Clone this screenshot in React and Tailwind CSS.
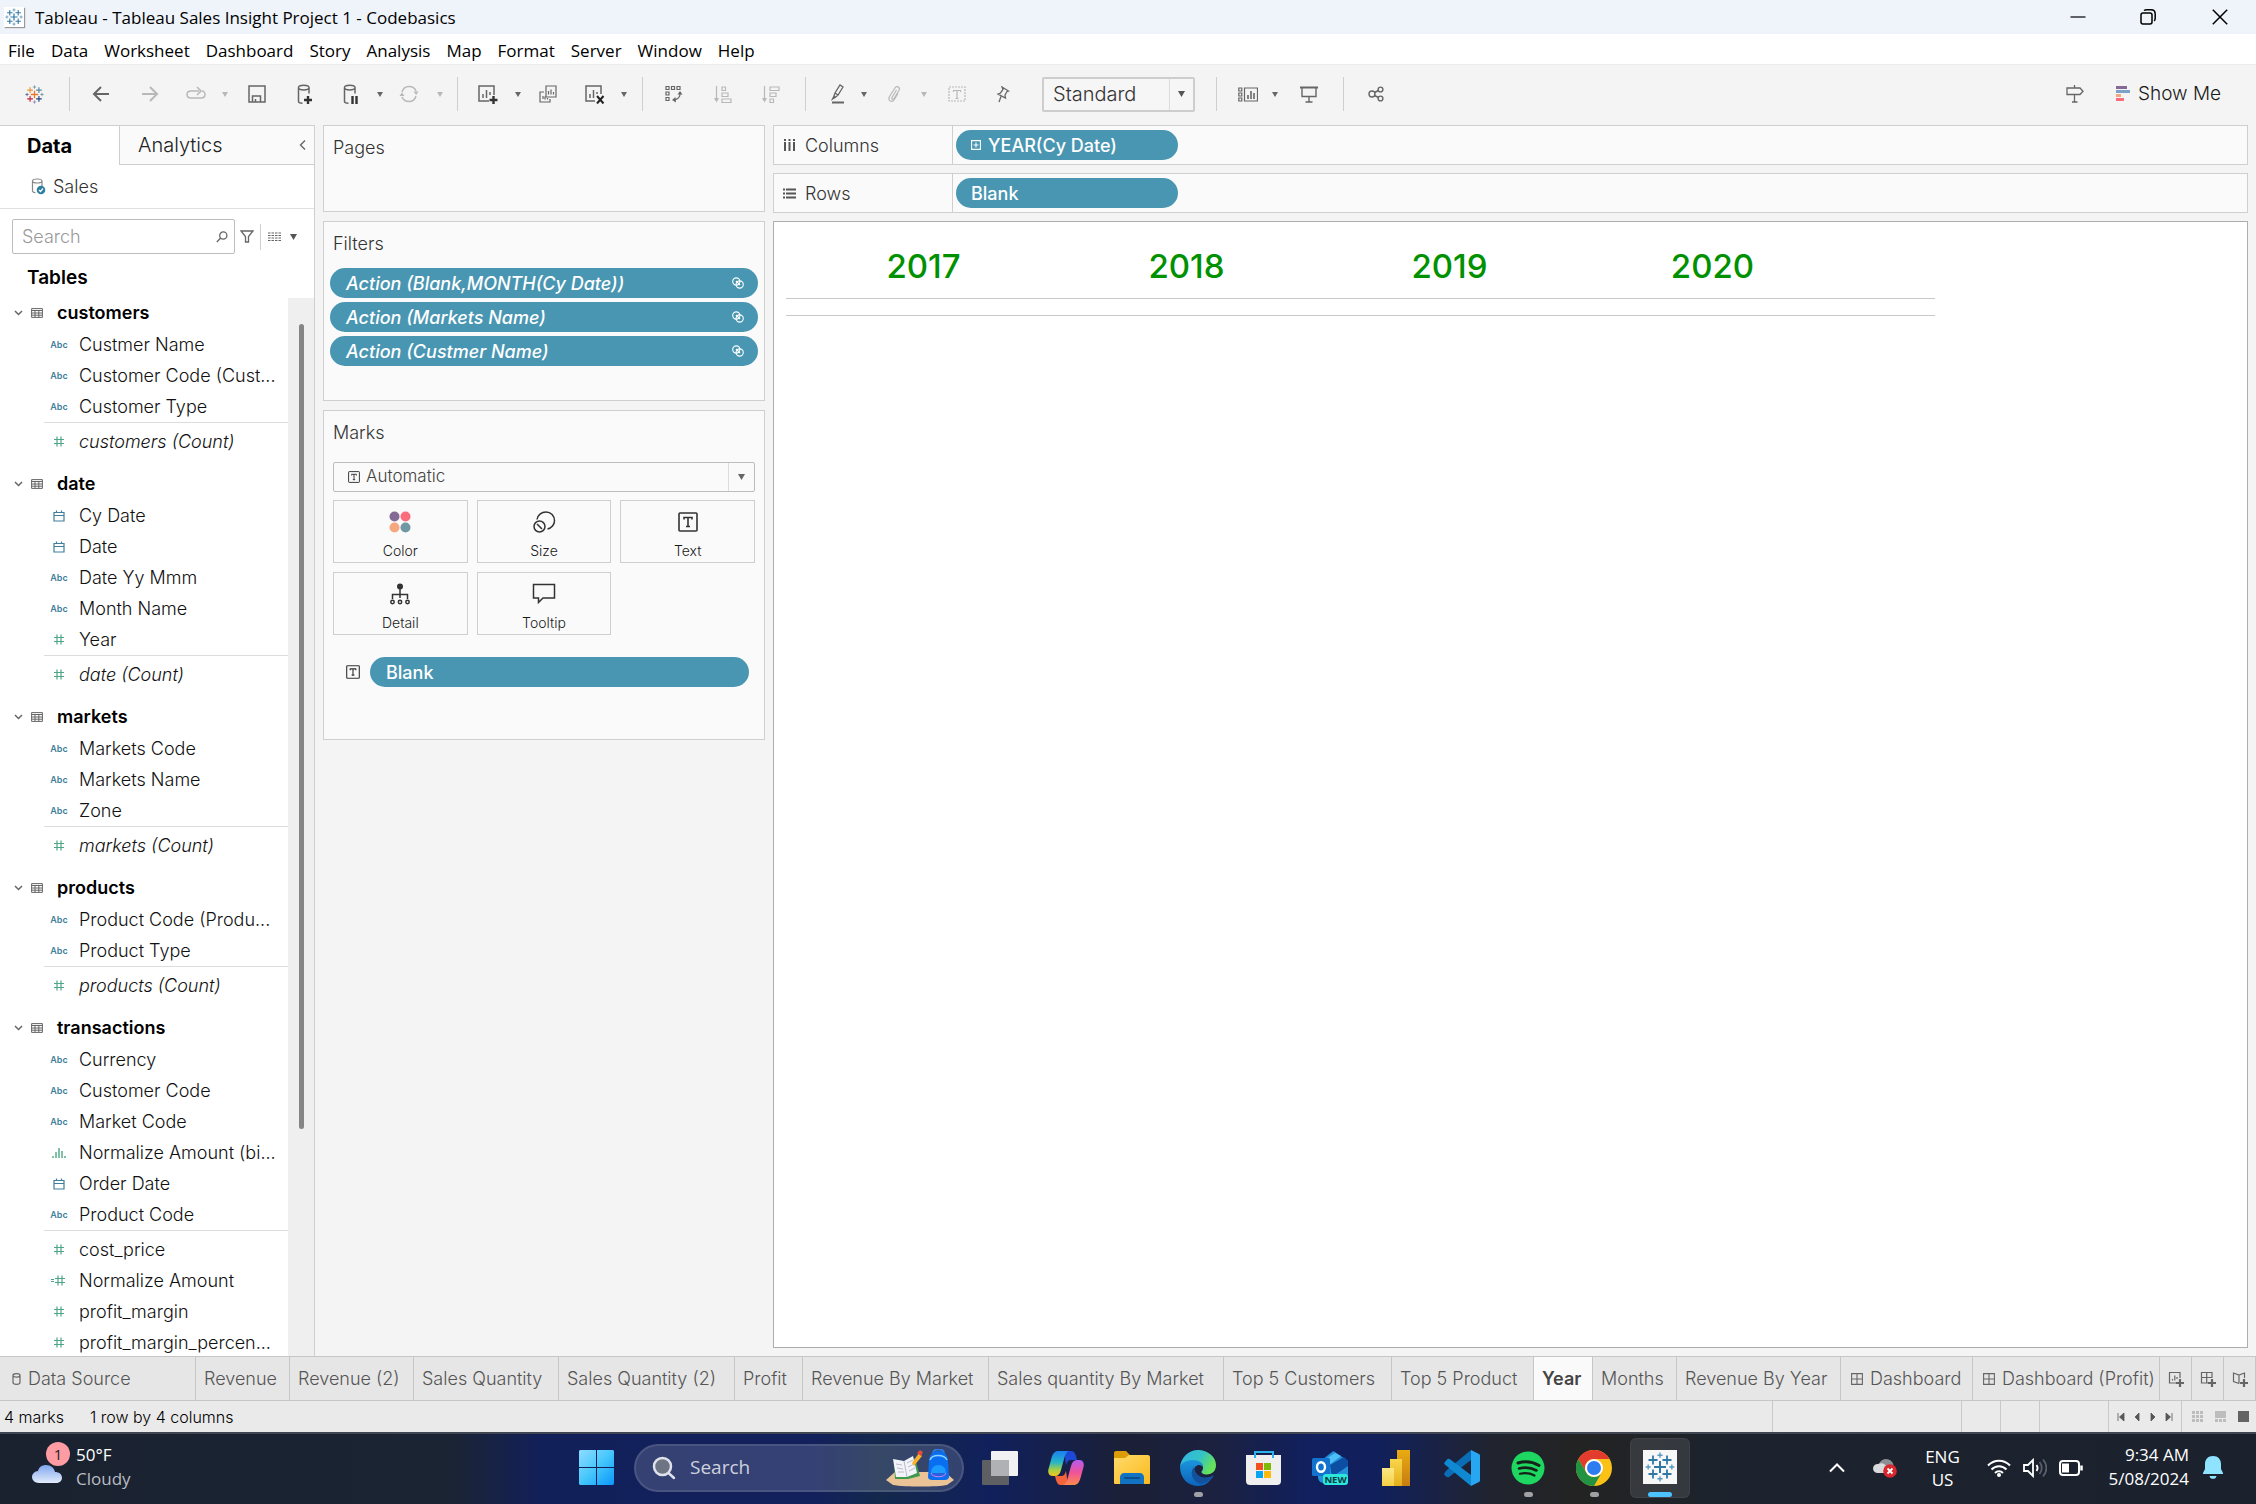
import React from "react";

const FONT = "font-['Inter','Noto_Sans',sans-serif]";
const SEGOE = "font-['Open_Sans','Noto_Sans',sans-serif]";

/* ---------- small shared drawings ---------- */

function TableauMark({ size, colors }) {
  const c = colors || ["#2f78a6", "#2f78a6", "#2f78a6", "#2f78a6", "#2f78a6", "#5a9abf", "#5a9abf", "#5a9abf", "#5a9abf"];
  const plus = (x, y, r, color, w) => (
    <path key={`${x}-${y}`} d={`M${x - r} ${y}h${2 * r}M${x} ${y - r}v${2 * r}`} stroke={color} strokeWidth={w} />
  );
  return (
    <svg width={size} height={size} viewBox="0 0 30 30" fill="none" aria-hidden="true">
      {plus(15, 15, 6, c[0], 2)}
      {plus(8, 8, 4.5, c[1], 1.8)}
      {plus(22, 8, 4.5, c[2], 1.8)}
      {plus(8, 22, 4.5, c[3], 1.8)}
      {plus(22, 22, 4.5, c[4], 1.8)}
      {plus(15, 3.2, 2.6, c[5], 1.4)}
      {plus(15, 26.8, 2.6, c[6], 1.4)}
      {plus(3.2, 15, 2.6, c[7], 1.4)}
      {plus(26.8, 15, 2.6, c[8], 1.4)}
    </svg>
  );
}

function Icon({ w = 24, h = 24, className = "text-[#666]", children, sw = 1.5 }) {
  return (
    <svg width={w} height={h} viewBox={`0 0 ${w} ${h}`} fill="none" stroke="currentColor" strokeWidth={sw} className={className} aria-hidden="true">
      {children}
    </svg>
  );
}

function Caret({ className = "text-[#666]", w = 6 }) {
  return (
    <svg width={w} height={w - 1} viewBox="0 0 6 5" className={className} aria-hidden="true">
      <path d="M0 0h6L3 5z" fill="currentColor" />
    </svg>
  );
}

function TextBoxIcon({ size = 14, className = "text-[#333]" }) {
  return (
    <svg width={size} height={size} viewBox="0 0 20 20" fill="none" stroke="currentColor" strokeWidth="1.6" className={className} aria-hidden="true">
      <rect x="1" y="1" width="18" height="18" rx="1" />
      <path d="M6 7.5V5.5h8v2M10 5.5v9M8 14.5h4" />
    </svg>
  );
}

function DashGrid() {
  return (
    <Icon w={12} h={12} sw={1.1}>
      <path d="M.6 .6h10.8v10.8H.6zM6 .6v10.8M.6 6h10.8" />
    </Icon>
  );
}

/* ---------- title bar and menu ---------- */

function TitleBar() {
  return (
    <header className={`flex h-[34px] shrink-0 items-center bg-[#eff3fa] ${SEGOE}`}>
      <div className="ml-1 flex h-5 w-5 items-center justify-center bg-white shadow-[1px_1px_1px_#999]">
        <TableauMark size={18} />
      </div>
      <h1 className="ml-[11px] pt-px text-[17px] leading-6 text-black">Tableau - Tableau Sales Insight Project 1 - Codebasics</h1>
      <div className="ml-auto flex h-full text-black">
        <button aria-label="Minimize" className="flex w-[70px] items-center justify-center">
          <Icon w={16} h={16} sw={1.2} className="text-black"><path d="M.5 8h15" /></Icon>
        </button>
        <button aria-label="Restore" className="flex w-[70px] items-center justify-center">
          <Icon w={16} h={16} className="text-black">
            <rect x="1" y="4" width="11" height="11" rx="2" />
            <path d="M4 1.5C5 .8 6 .8 7 .8h4c2.500 0 4.200 1.700 4.200 4.200v4c0 1-.2 2-.9 3" />
          </Icon>
        </button>
        <button aria-label="Close" className="flex w-[73px] items-center justify-center">
          <Icon w={16} h={16} className="text-black"><path d="M.8 .8l14.400 14.400M15.200 .8L.8 15.200" /></Icon>
        </button>
      </div>
    </header>
  );
}

const menus = ["File", "Data", "Worksheet", "Dashboard", "Story", "Analysis", "Map", "Format", "Server", "Window", "Help"];

function MenuBar() {
  return (
    <nav className={`flex h-[30px] shrink-0 items-center gap-4 bg-white pl-2 pt-[3px] text-[17px] text-black ${SEGOE}`}>
      {menus.map((m) => (
        <button key={m} className="leading-6">{m}</button>
      ))}
    </nav>
  );
}

/* ---------- toolbar ---------- */

function Sep({ className }) {
  return <div className={`h-[34px] w-px shrink-0 bg-[#cfcfcf] ${className}`} />;
}

function Tool({ label, className, children }) {
  return (
    <button aria-label={label} className={`flex h-10 shrink-0 items-center justify-center ${className}`}>
      {children}
    </button>
  );
}

const cyl = "M1.500 3.500v14c0 1 1.500 1.600 4 1.700M12 3.500v6M1.500 3.500c0-1.400 2.200-2.300 5.200-2.300S12 2.100 12 3.500 9.800 5.900 6.700 5.900 1.500 4.900 1.500 3.500z";

function Toolbar() {
  const dim = "text-[#b8b8b8]";
  return (
    <div className="flex h-[61px] shrink-0 items-center border-t border-[#ececec] bg-[#f4f4f4] pb-[2px]">
      <Tool label="Start page" className="w-[69px]">
        <TableauMark size={19} colors={["#e8762c", "#e8963a", "#5b879b", "#c72035", "#1f457e", "#7199a6", "#8a8fb0", "#5c6692", "#7199a6"]} />
      </Tool>
      <Sep />
      <Tool label="Undo" className="ml-[6px] w-[50px]">
        <Icon w={18} h={16} sw={2}><path d="M9 1L2 8l7 7M2 8h15" /></Icon>
      </Tool>
      <Tool label="Redo" className="w-12">
        <Icon w={18} h={16} sw={2} className={dim}><path d="M9 1l7 7-7 7M16 8H1" /></Icon>
      </Tool>
      <Tool label="Replay" className="w-11">
        <Icon w={20} h={16} className={dim}><path d="M13 5H5C2.500 5 1 6.500 1 8.500S2.500 12 5 12h10c2.500 0 4-1.500 4-3.500S17.500 5 16 5" /><path d="M11 1l4 4-4 4" /></Icon>
      </Tool>
      <Tool label="Replay options" className="w-[14px]"><Caret className={dim} /></Tool>
      <Tool label="Save" className="w-[50px]">
        <Icon w={18} h={18}><path d="M1 1h16v16H1z" /><path d="M4.500 17v-6h8v6M7.500 17v-3" /></Icon>
      </Tool>
      <Tool label="New data source" className="w-[46px]">
        <Icon w={16} h={20}><path d={cyl} /><path d="M11 12v8M7 16h8" strokeWidth="2.400" className="text-[#333]" /></Icon>
      </Tool>
      <Tool label="Pause updates" className="w-[46px]">
        <Icon w={16} h={20}><path d={cyl} /><path d="M9.500 12v8M13.500 12v8" strokeWidth="2.400" className="text-[#333]" /></Icon>
      </Tool>
      <Tool label="Pause options" className="w-3"><Caret /></Tool>
      <Tool label="Refresh" className="w-[46px]">
        <Icon w={20} h={18} className={dim}><path d="M3 7c1-3.500 4-5.500 7-5.500S16 3.500 17 6M17 11c-1 3.500-4 5.500-7 5.500S4 14.500 3 12" /><path d="M14.500 6.500h5l-2.300 3.500zM.5 11h5L3 7.500z" fill="currentColor" stroke="none" /></Icon>
      </Tool>
      <Tool label="Refresh options" className="w-4"><Caret className={dim} /></Tool>
      <Sep className="ml-[9px]" />
      <Tool label="New worksheet" className="ml-[6px] w-12">
        <Icon w={20} h={19}><path d="M11 16H1V1h15v9M5 13V9M8.500 13V5M12 10V7" /><path d="M15.500 11v8M11.500 15h8" strokeWidth="2.400" className="text-[#333]" /></Icon>
      </Tool>
      <Tool label="New worksheet options" className="w-3"><Caret /></Tool>
      <Tool label="Duplicate" className="w-12">
        <Icon w={18} h={18} sw={1.2}><path d="M7 1h10v11H7zM5 7H1v10h10v-3M9.500 9.500V6M12 9.500v-5M14.500 9.500V7M4 14v-3M6 14.500v-3M8.500 14.500v-1.500" /></Icon>
      </Tool>
      <Tool label="Clear sheet" className="w-[46px]">
        <Icon w={20} h={19}><path d="M10 16H1V1h15v8M5 13V9M8.500 13V5M12 9V7" /><path d="M12 11l6.500 7.500M18.500 11L12 18.500" strokeWidth="2" className="text-[#222]" /></Icon>
      </Tool>
      <Tool label="Clear options" className="w-3"><Caret /></Tool>
      <Sep className="ml-3" />
      <Tool label="Swap rows and columns" className="ml-[7px] w-12">
        <Icon w={18} h={18} sw={1.2}><path d="M1 1.500h3v3H1zM6.500 1.500h3v3h-3zM12 1.500h3v3h-3zM1 7h3v3H1zM1 12.500h3v3H1z" /><path d="M15 8c.5 4-2.500 6.500-6 7" /><path d="M12.500 9.500L15 6l2.500 3.500zM10.500 12l-3.500 3 4 2.500z" fill="currentColor" stroke="none" /></Icon>
      </Tool>
      <Tool label="Sort ascending" className="w-[50px]">
        <Icon w={18} h={17} sw={1.2} className={dim}><path d="M2.500 0v15M8 1h3.500v3.500H8zM8 7h6v3.500H8zM8 13h9v3.500H8z" /><path d="M0 12h5l-2.500 4.500z" fill="currentColor" stroke="none" /></Icon>
      </Tool>
      <Tool label="Sort descending" className="w-[46px]">
        <Icon w={18} h={17} sw={1.2} className={dim}><path d="M2.500 0v15M8 1h9v3.500H8zM8 7h6v3.500H8zM8 13h3.500v3.500H8z" /><path d="M0 12h5l-2.500 4.500z" fill="currentColor" stroke="none" /></Icon>
      </Tool>
      <Sep className="ml-[11px]" />
      <Tool label="Highlight" className="ml-[11px] w-[42px]">
        <Icon w={14} h={20} sw={1.3}><path d="M3 12l1-3 5-8 3 2-5 8-3 2.500zM4 9l3 2M3 12l-1.500 3 2.500-1.500" /><path d="M1 18.500h12" strokeWidth="2" /></Icon>
      </Tool>
      <Tool label="Highlight options" className="w-[10px]"><Caret /></Tool>
      <Tool label="Group members" className="w-[50px]">
        <Icon w={14} h={18} sw={1.2} className={dim}><path d="M9.500 5L5 12.500c-.8 1.500 1 2.500 2 1L12 5.500c1.500-3-2-5.500-4-2.500L2.500 11.500C.5 15 4.500 18.500 7 15l4-6.500" /></Icon>
      </Tool>
      <Tool label="Group options" className="w-[10px]"><Caret className={dim} /></Tool>
      <Tool label="Show mark labels" className="w-14">
        <Icon w={18} h={16} sw={1.2} className={dim}><rect x="1" y="1" width="16" height="14" strokeDasharray="2 1" /><path d="M5.500 6V4.500h7V6M9 4.500v8M7.500 12.500h3" /></Icon>
      </Tool>
      <Tool label="Fix axes" className="w-9">
        <Icon w={14} h={17} sw={1.3}><path d="M6 1l6.500 4-1.500.5-2 3.500.5 3L2 8l2.500-1L7 3.500zM5 10.500L3 16" /></Icon>
      </Tool>
      <div className="relative ml-[21px] h-[35px] w-[153px] rounded-[2px] border-2 border-[#cdcdcd] bg-[#f6f6f6]">
        <select aria-label="Fit" className={`h-full w-full appearance-none bg-transparent pl-[9px] text-[20px] text-[#333] ${FONT} font-light`}>
          <option>Standard</option>
        </select>
        <div className="pointer-events-none absolute inset-y-0 right-0 flex w-6 items-center justify-center border-l border-[#dcdcdc]"><Caret className="text-[#555]" w={7} /></div>
      </div>
      <Sep className="ml-[21px]" />
      <Tool label="Show cards" className="ml-[10px] w-[42px]">
        <Icon w={20} h={15} sw={1.2}><path d="M.8 1h3v3h-3zM.8 6h3v3h-3zM.8 11h3v3h-3zM6.500 1h13v13h-13z" /><path d="M10 12V8M13 12V4M16 12V6" strokeWidth="1.600" /></Icon>
      </Tool>
      <Tool label="Card options" className="w-3"><Caret /></Tool>
      <Tool label="Presentation mode" className="w-14">
        <Icon w={18} h={17} sw={1.4}><path d="M0 1.500h18" strokeWidth="2" /><path d="M2 2v8.500h14V2M9 10.500V16M5.500 16h7" /></Icon>
      </Tool>
      <Sep className="ml-[6px]" />
      <Tool label="Share" className="w-16">
        <Icon w={16} h={16} sw={1.4}><circle cx="4" cy="8" r="3" /><circle cx="12.500" cy="3.500" r="2.400" /><circle cx="12.500" cy="12.500" r="2.400" /><path d="M6.500 6.500l4-2M6.500 9.500l4 2" /></Icon>
      </Tool>
      <Tool label="Data guide" className="ml-auto mr-8 w-[18px]">
        <Icon w={18} h={18} sw={1.3}><path d="M1 3h13l3 3.200L14 9.500H1zM8.500 0v3M8.500 9.500V17M6 17h5.500" /></Icon>
      </Tool>
      <button className={`mr-[35px] flex items-center gap-2 text-[19px] leading-7 text-[#1a1a1a] ${FONT}`}>
        <svg width="14" height="16" aria-hidden="true">
          <path d="M0 0h11v3H0z" fill="#846b95" /><path d="M0 4h14v3H0z" fill="#7ba3c9" /><path d="M0 8h5v3H0z" fill="#f5a77f" /><path d="M0 12h8v3H0z" fill="#fb6c7c" />
        </svg>
        <span className="font-light">Show Me</span>
      </button>
    </div>
  );
}

/* ---------- data pane ---------- */

const tables = [
  { name: "customers", dims: [["abc", "Custmer Name"], ["abc", "Customer Code (Cust..."], ["abc", "Customer Type"]], measures: [["num", "customers (Count)", true]] },
  { name: "date", dims: [["cal", "Cy Date"], ["cal", "Date"], ["abc", "Date Yy Mmm"], ["abc", "Month Name"], ["num", "Year"]], measures: [["num", "date (Count)", true]] },
  { name: "markets", dims: [["abc", "Markets Code"], ["abc", "Markets Name"], ["abc", "Zone"]], measures: [["num", "markets (Count)", true]] },
  { name: "products", dims: [["abc", "Product Code (Produ..."], ["abc", "Product Type"]], measures: [["num", "products (Count)", true]] },
  {
    name: "transactions",
    dims: [["abc", "Currency"], ["abc", "Customer Code"], ["abc", "Market Code"], ["bin", "Normalize Amount (bi..."], ["cal", "Order Date"], ["abc", "Product Code"]],
    measures: [["num", "cost_price"], ["calc", "Normalize Amount"], ["num", "profit_margin"], ["num", "profit_margin_percen..."]],
  },
];

function FieldIcon({ kind }) {
  if (kind === "abc") return <span className="text-[9px] font-semibold leading-none text-[#3f7f9c]">Abc</span>;
  if (kind === "cal")
    return <Icon w={12} h={12} sw={1.2} className="text-[#3f7f9c]"><path d="M1 2.500h10v8.500H1zM1 5.500h10M3.500 .5v2M8.500 .5v2" /></Icon>;
  if (kind === "bin")
    return <Icon w={14} h={11} sw={1.4} className="text-[#4ea687]"><path d="M1 11V9M4 11V5M7 11V1M10 11V4M13 11V9" /></Icon>;
  if (kind === "calc")
    return <Icon w={18} h={11} sw={1.2} className="text-[#4ea687]"><path d="M1 4.500h3M1 6.500h3M8 .5v10M12 .5v10M5 3.500h10M5 7.500h10" /></Icon>;
  return <Icon w={10} h={11} sw={1.2} className="text-[#4ea687]"><path d="M3 .5v10M7 .5v10M0 3.500h10M0 7.500h10" /></Icon>;
}

function Field({ field }) {
  const [kind, name, italic] = field;
  return (
    <li className="flex h-[31px] items-center">
      <span className="ml-[44px] flex w-[30px] items-center justify-center">
        <FieldIcon kind={kind} />
      </span>
      <span className={`ml-[5px] whitespace-nowrap text-[18px] text-[#111] ${italic ? "italic" : ""}`}>{name}</span>
    </li>
  );
}

function DataPane() {
  return (
    <aside className={`flex w-[315px] shrink-0 flex-col border-r border-t border-[#cfcfcf] bg-white font-light ${FONT}`}>
      <div className="flex h-[39px] shrink-0 text-[20px] text-black">
        <button className="w-[119px] pr-5 text-center font-bold">Data</button>
        <button className="flex flex-1 items-center border-b border-l border-[#cfcfcf] bg-[#fafafa] pl-[18px] text-[#222]">Analytics</button>
        <button aria-label="Collapse pane" className="flex w-6 items-center justify-center border-b border-[#cfcfcf] bg-[#fafafa]">
          <Icon w={7} h={10} sw={1.4}><path d="M6 .5L1.500 5 6 9.500" /></Icon>
        </button>
      </div>
      <button className="flex h-[44px] shrink-0 items-center gap-[7px] border-b border-[#e0e0e0] pl-[31px] text-[18px] text-[#333]">
        <Icon w={15} h={17} sw={1.2} className="text-[#888]">
          <path d="M1.500 3v10c0 1 1 1.500 3 1.700M11 3v5M1.500 3C1.500 1.800 3.500 1 6.300 1S11 1.800 11 3 9 5 6.300 5 1.500 4.200 1.500 3z" />
          <circle cx="10" cy="12" r="4.300" fill="#2e7f9f" stroke="none" /><path d="M8 12l1.500 1.500 2.500-3" stroke="#fff" />
        </Icon>
        Sales
      </button>
      <div className="flex shrink-0 items-center pl-3 pt-[10px]">
        <div className="flex h-[35px] w-[223px] items-center rounded-[2px] border border-[#bdbdbd] pl-[9px] pr-[6px]">
          <input type="text" aria-label="Search fields" placeholder="Search" className="w-0 flex-1 text-[18px] outline-none placeholder:text-[#999]" />
          <Icon w={12} h={12} sw={1.3}><circle cx="7.300" cy="4.500" r="3.600" /><path d="M4.700 7L.8 11" /></Icon>
        </div>
        <button aria-label="Filter fields" className="ml-[5px]"><Icon w={14} h={13} sw={1.3}><path d="M1 1h12L8.500 6.500V12h-3V6.500z" /></Icon></button>
        <div className="ml-[6px] h-[26px] w-px bg-[#cfcfcf]" />
        <button aria-label="View options" className="ml-[7px] flex items-center gap-[9px]">
          <Icon w={13} h={10} sw={1.2}><path d="M0 1h13M0 3.500h13M0 6h13M0 8.500h13" strokeDasharray="2.500 1" /></Icon>
          <Caret className="text-[#555]" w={7} />
        </button>
      </div>
      <h2 className="flex h-[44px] shrink-0 items-center pl-[27px] pt-1 text-[19px] font-semibold text-black">Tables</h2>
      <div className="flex min-h-0 flex-1">
        <ul className="min-w-0 flex-1 overflow-hidden">
          {tables.map((t) => (
            <li key={t.name} className="mb-[12px]">
              <button className="flex h-[29px] w-full items-center pl-[14px] text-[18px] font-semibold text-black">
                <Icon w={9} h={6} sw={1.5}><path d="M1 1l3.500 3.500L8 1" /></Icon>
                <Icon w={12} h={10} sw={1} className="ml-[8px] text-[#666]"><path d="M.6 .6h10.800v8.800H.6zM.6 2.500h10.800M.6 5h10.800M.6 7.200h10.800M4 2.500v7M7.800 2.500v7" /></Icon>
                <span className="ml-[14px]">{t.name}</span>
              </button>
              <ul className="pt-[2px]">
                {t.dims.map((f) => <Field key={f[1]} field={f} />)}
              </ul>
              <ul className="ml-[44px] border-t border-[#dcdcdc] pt-[3px] *:-ml-[44px]">
                {t.measures.map((f) => <Field key={f[1]} field={f} />)}
              </ul>
            </li>
          ))}
        </ul>
        <div className="flex w-[26px] shrink-0 justify-center bg-[#efefef] pt-[26px]">
          <div className="h-[78%] w-[5px] rounded-full bg-[#858585]" />
        </div>
      </div>
    </aside>
  );
}

/* ---------- cards ---------- */

const pill = "flex h-[30px] items-center rounded-full bg-[#4996b2] text-[18px] text-white";

function Card({ title, className, children }) {
  return (
    <section className={`border border-[#cfcfcf] bg-[#fafafa] ${className}`}>
      <h2 className="px-[9px] pt-2 text-[18px] leading-7 text-[#333]">{title}</h2>
      {children}
    </section>
  );
}

function MarkButton({ label, children }) {
  return (
    <button className="flex h-[63px] flex-col items-center justify-end border border-[#cfcfcf] bg-[#fafafa] pb-px text-[#1a1a1a]">
      <span className="flex h-6 items-center">{children}</span>
      <span className="mt-[7px] text-[14px] leading-5">{label}</span>
    </button>
  );
}

function Cards() {
  return (
    <div className={`ml-2 flex w-[442px] shrink-0 flex-col gap-[9px] font-light ${FONT}`}>
      <Card title="Pages" className="h-[87px]" />
      <Card title="Filters" className="h-[180px]">
        <ul className="mt-[10px] flex flex-col gap-1 px-[6px]">
          {["Action (Blank,MONTH(Cy Date))", "Action (Markets Name)", "Action (Custmer Name)"].map((f) => (
            <li key={f}>
              <button className={`${pill} w-full justify-between pl-4 pr-[14px] font-medium italic`}>
                {f}
                <Icon w={12} h={12} sw={1.1} className="text-white"><circle cx="4.300" cy="4.500" r="3.600" /><circle cx="7.700" cy="7.500" r="3.600" /><path d="M4 4l4 4" /></Icon>
              </button>
            </li>
          ))}
        </ul>
      </Card>
      <Card title="Marks" className="h-[330px]">
        <div className="px-[9px] pt-[15px]">
          <div className="relative h-[30px] rounded-[2px] border border-[#bdbdbd]">
            <select aria-label="Mark type" className="h-full w-full appearance-none bg-transparent pl-8 text-[17px] text-[#444]">
              <option>Automatic</option>
            </select>
            <div className="pointer-events-none absolute inset-y-0 left-[14px] flex items-center"><TextBoxIcon size={12} /></div>
            <div className="pointer-events-none absolute inset-y-0 right-0 flex w-[26px] items-center justify-center border-l border-[#dcdcdc]"><Caret w={7} /></div>
          </div>
          <div className="mt-[8px] grid grid-cols-3 gap-[9px]">
            <MarkButton label="Color">
              <svg width="22" height="22" aria-hidden="true">
                <circle cx="5.500" cy="5.500" r="5" fill="#846b95" /><circle cx="16.500" cy="5.500" r="5" fill="#fb6c7c" /><circle cx="5.500" cy="16.500" r="5" fill="#f5a77f" /><circle cx="16.500" cy="16.500" r="5" fill="#6f98a4" />
              </svg>
            </MarkButton>
            <MarkButton label="Size">
              <Icon w={24} h={22} sw={1.5} className="text-[#333]"><circle cx="7.500" cy="15.500" r="5.500" /><path d="M5 13l5 5M5 8.500C5.500 4 9.500 1 14 1c5 0 8.500 4 8.500 8.700 0 4-3 7.600-7 8.300" /></Icon>
            </MarkButton>
            <MarkButton label="Text"><TextBoxIcon size={20} /></MarkButton>
            <MarkButton label="Detail">
              <Icon w={20} h={22} sw={1.5} className="text-[#333]"><circle cx="10" cy="3.500" r="3" fill="currentColor" stroke="none" /><path d="M10 5v10M2.500 16v-4.500h15V16" /><circle cx="2.500" cy="19" r="1.700" /><circle cx="10" cy="19" r="1.700" /><circle cx="17.500" cy="19" r="1.700" /></Icon>
            </MarkButton>
            <MarkButton label="Tooltip">
              <Icon w={24} h={22} sw={1.5} className="text-[#333]"><path d="M1.500 1.500h21v13.500H11l-4.500 4.500V15h-5z" /></Icon>
            </MarkButton>
          </div>
          <div className="mt-[22px] flex items-center pl-[13px] pr-[6px]">
            <TextBoxIcon size={14} />
            <button className={`${pill} ml-[10px] flex-1 pl-4 font-medium`}>Blank</button>
          </div>
        </div>
      </Card>
    </div>
  );
}

/* ---------- shelves and view ---------- */

function Shelf({ label, icon, children }) {
  return (
    <div className="flex h-10 shrink-0 border border-[#cfcfcf] bg-[#fafafa]">
      <div className="flex w-[179px] items-center gap-[9px] border-r border-[#cfcfcf] pl-[9px] text-[18px] text-[#333]">
        {icon}
        {label}
      </div>
      <div className="flex items-center pl-[3px]">{children}</div>
    </div>
  );
}

function Worksheet() {
  return (
    <main className={`ml-2 mr-2 flex min-w-0 flex-1 flex-col gap-2 pb-2 font-light ${FONT}`}>
      <Shelf label="Columns" icon={<Icon w={13} h={12} sw={2} className="text-[#555]"><path d="M2 0v2M2 3v9M6.500 0v2M6.500 3v9M11 0v2M11 3v9" /></Icon>}>
        <button className={`${pill} w-[222px] gap-[7px] pl-[15px] font-medium`}>
          <Icon w={10} h={10} sw={1.1} className="text-white"><path d="M.6 .6h8.800v8.800H.6zM5 2.500v5M2.500 5h5" /></Icon>
          YEAR(Cy Date)
        </button>
      </Shelf>
      <Shelf label="Rows" icon={<Icon w={13} h={11} sw={2} className="text-[#555]"><path d="M0 1.500h2M3 1.500h10M0 5.500h2M3 5.500h10M0 9.500h2M3 9.500h10" /></Icon>}>
        <button className={`${pill} w-[222px] pl-[15px] font-medium`}>Blank</button>
      </Shelf>
      <div className="flex-1 border border-[#adadad] bg-white pl-3">
        <table className="mt-4 w-[1149px] table-fixed border-collapse text-[33px] font-medium text-[#009100]">
          <thead>
            <tr className="h-[60px] border-b border-[#c8c8c8]">
              <td className="w-[6px]" />
              {["2017", "2018", "2019", "2020"].map((y) => (
                <th key={y} className="w-[263px] pb-[2px] text-center font-medium">{y}</th>
              ))}
              <td />
            </tr>
          </thead>
          <tbody>
            <tr className="h-[17px] border-b border-[#c8c8c8]">
              <td colSpan={6} />
            </tr>
          </tbody>
        </table>
      </div>
    </main>
  );
}

/* ---------- sheet tabs and status bar ---------- */

const sheets = [
  ["Revenue", "w-[94px]"],
  ["Revenue (2)", "w-[124px]"],
  ["Sales Quantity", "w-[145px]"],
  ["Sales Quantity (2)", "w-[176px]"],
  ["Profit", "w-[68px]"],
  ["Revenue By Market", "w-[186px]"],
  ["Sales quantity By Market", "w-[235px]"],
  ["Top 5 Customers", "w-[168px]"],
  ["Top 5 Product", "w-[142px]"],
  ["Year", "w-[59px]", "active"],
  ["Months", "w-[84px]"],
  ["Revenue By Year", "w-[164px]"],
  ["Dashboard", "w-[132px]", "dash"],
  ["Dashboard (Profit)", "w-[187px]", "dash"],
];

function SheetTabs() {
  const plus = <path d="M12 8v8M8 12h8" strokeWidth="2.200" />;
  const add = "flex w-8 shrink-0 items-center justify-center border-r border-[#c6c6c6]";
  return (
    <div className={`flex h-[45px] shrink-0 overflow-hidden border-y border-[#c6c6c6] bg-[#e6e6e6] text-[18px] font-light text-[#555] ${FONT}`}>
      <button className="flex w-[196px] shrink-0 items-center gap-[7px] border-r border-[#c6c6c6] pl-3">
        <Icon w={9} h={12} sw={1.2}><path d="M1 2.500v7c0 2.500 7 2.500 7 0v-7c0-2.400-7-2.400-7 0 0 2.200 7 2.200 7 0" /></Icon>
        Data Source
      </button>
      {sheets.map(([name, w, kind]) => (
        <button key={name} className={`flex shrink-0 items-center gap-[7px] whitespace-nowrap border-r border-[#c6c6c6] ${w} ${kind === "dash" ? "pl-[10px]" : "pl-2"} ${kind === "active" ? "bg-[#fafafa] font-semibold text-[#444]" : ""}`}>
          {kind === "dash" && <DashGrid />}
          {name}
        </button>
      ))}
      <button aria-label="New worksheet" className={add}><Icon w={16} h={16} sw={1.2}><path d="M8 12H1.500V1.500H12V7M4.500 9.500V8M6.800 9.500v-5M9 8V6" />{plus}</Icon></button>
      <button aria-label="New dashboard" className={add}><Icon w={16} h={16} sw={1.2}><path d="M8 12H1.500V1.500H12V7M6.700 1.500V12M1.500 6.500H12" />{plus}</Icon></button>
      <button aria-label="New story" className={add}><Icon w={16} h={16} sw={1.2}><path d="M7 12.500l-5.500-2V2L7 4l5.500-2v5M7 4v8.500" />{plus}</Icon></button>
    </div>
  );
}

function StatusBar() {
  const cell = "h-full shrink-0 border-l border-[#c9c9c9]";
  return (
    <div className={`flex h-[31px] shrink-0 items-center bg-[#eaeaea] pl-1 text-[16px] font-light text-black ${FONT}`}>
      <span>4 marks</span>
      <span className="ml-[26px]">1 row by 4 columns</span>
      <div className={`${cell} ml-auto w-[189px]`} />
      <div className={`${cell} w-[39px]`} />
      <div className={`${cell} w-[39px]`} />
      <div className={`${cell} w-[69px]`} />
      <div className={`${cell} flex w-[73px] items-center justify-around px-1 text-[#555]`}>
        {[
          ["First sheet", "M1 1v8M7 1v8L2.500 5z"],
          ["Previous sheet", "M6 1v8L2 5z"],
          ["Next sheet", "M2 1v8l4-4z"],
          ["Last sheet", "M7 1v8M1 1v8l4.500-4z"],
        ].map(([l, d]) => (
          <button key={l} aria-label={l}>
            <svg width="8" height="10" aria-hidden="true"><path d={d} fill="currentColor" stroke="currentColor" strokeWidth=".8" /></svg>
          </button>
        ))}
      </div>
      <div className={`${cell} flex w-[75px] items-center justify-between pl-[10px] pr-[7px]`}>
        <button aria-label="Sheet sorter"><svg width="11" height="11" aria-hidden="true"><path d="M0 1.500h3m1 0h3m1 0h3M0 5.500h3m1 0h3m1 0h3M0 9.500h3m1 0h3m1 0h3" stroke="#bdbdbd" strokeWidth="3" /></svg></button>
        <button aria-label="Filmstrip"><svg width="11" height="11" aria-hidden="true"><path d="M0 0h11v7H0z" fill="#bdbdbd" /><path d="M0 9.500h3m1 0h3m1 0h3" stroke="#bdbdbd" strokeWidth="3" /></svg></button>
        <button aria-label="Tabs" className="h-[11px] w-[11px] bg-[#636363]" />
      </div>
    </div>
  );
}

/* ---------- taskbar ---------- */

function TaskApp({ label, open, children }) {
  return (
    <button aria-label={label} className="flex h-full w-[66px] shrink-0 flex-col items-center">
      <span className="mt-4 flex h-9 items-center">{children}</span>
      {open && <span className="mt-[6px] h-[5px] w-[9px] rounded-full bg-[#a0a0a5]" />}
    </button>
  );
}

function Taskbar() {
  return (
    <footer
      className={`flex h-[72px] shrink-0 items-center border-t-2 border-[#3f4651] pb-[3px] text-[17px] text-white bg-[linear-gradient(90deg,#1a2230_0%,#1b2433_20%,#12205a_24%,#12205c_36%,#13284c_39%,#11205c_44%,#1b2036_50%,#1b2140_54%,#11205e_58%,#11205c_61%,#202430_66%,#232323_70%,#1c232e_77%,#1b222e_100%)] ${SEGOE}`}
    >
      <button className="ml-8 flex w-[400px] items-center gap-[6px] pb-[2px] text-left">
        <svg width="38" height="50" viewBox="0 0 38 50" aria-hidden="true">
          <defs><linearGradient id="cl" x1="0" y1="0" x2="0" y2="1"><stop offset="0" stopColor="#7fa6ef" /><stop offset="1" stopColor="#e2ecfb" /></linearGradient></defs>
          <path d="M7 41c-4 0-7-3-7-6s3-6 6-6c1-4 4-6 8-6 5 0 8 3 9 7 4 0 7 2 7 6 0 3-3 5-6 5z" fill="url(#cl)" />
          <circle cx="26" cy="12" r="12" fill="#ff9ba3" />
          <text x="26" y="17.500" fontSize="15" textAnchor="middle" fill="#222">1</text>
        </svg>
        <span className="flex flex-col leading-[24px]">
          <span>50°F</span>
          <span className="text-[#b9bcc2]">Cloudy</span>
        </span>
      </button>

      <div className="ml-[147px] flex h-full items-center">
        <button aria-label="Start" className="mr-5">
          <svg width="35" height="35" aria-hidden="true">
            <defs><linearGradient id="win" x1="0" y1="0" x2="1" y2="1"><stop offset="0" stopColor="#8fdcff" /><stop offset=".5" stopColor="#45c7fb" /><stop offset="1" stopColor="#0a97fb" /></linearGradient></defs>
            <path d="M1 0h16v17H0V1zM18 0h16l1 1v16H18zM0 18h17v17H1l-1-1zM18 18h17v16l-1 1H18z" fill="url(#win)" />
          </svg>
        </button>
        <label className="flex h-12 w-[330px] items-center rounded-full border-2 border-white/10 bg-white/15 pl-4 pr-2">
          <svg width="24" height="24" fill="none" stroke="#dfe2ea" strokeWidth="2.500" aria-hidden="true"><circle cx="10.500" cy="10.500" r="8.500" fill="#6d7484" /><path d="M16.500 17l5.500 5" strokeLinecap="round" /></svg>
          <input type="text" placeholder="Search" className="ml-[14px] w-0 flex-1 bg-transparent text-[19px] outline-none placeholder:text-[#ced2de]" />
          <svg width="68" height="38" viewBox="0 0 68 38" aria-hidden="true">
            <path d="M0 31l9-8h50l9 8-7 5c-10 2-42 2-54 0z" fill="#eac496" />
            <path d="M8 12l12 2 9-5 5 18-12 3-13 0z" fill="#3f9a4d" />
            <path d="M7 10l11 2 9-5 4 17-10 4-11 0z" fill="#f3f3fa" />
            <path d="M18 12l3 16M10 15l6 1M11 19l6 1M12 23l6 0M21 14l6-3M22 18l6-3M23 22l6-3" stroke="#b9bacb" fill="none" />
            <path d="M26 14l7-10 3 3-8 10z" fill="#fbb02c" /><path d="M31 4l3-3 3 2-2 4z" fill="#e64b3d" />
            <path d="M47 4c1-5 10-5 11 0" stroke="#2b7be0" strokeWidth="2" fill="none" />
            <path d="M43 12c0-6 4-10 9.500-10S62 6 62 12l1 16c0 2-2 3-4 3H46c-2 0-4-1-4-3z" fill="#0a6ef0" />
            <path d="M44 11c2-6 14-6 17 0" stroke="#8ad1ff" strokeWidth="1.500" fill="none" />
            <path d="M45 24c0-5 3-8 7.500-8s7.500 3 7.500 8z" fill="#1a9bff" /><path d="M45 24h15v4H45z" fill="#2b5fe0" /><path d="M45 24c1 5 14 5 15 0" stroke="#c18cf5" fill="none" />
          </svg>
        </label>
        <div className="ml-[3px] flex h-full">
          <TaskApp label="Task view">
            <svg width="36" height="34" aria-hidden="true">
              <rect x="0" y="9" width="27" height="25" rx="1" fill="#5d5f63" />
              <rect x="9" y="0" width="27" height="25" rx="1" fill="#f1f1f3" />
              <path d="M9 9h18v16H9z" fill="#b0b1b4" />
            </svg>
          </TaskApp>
          <TaskApp label="Copilot">
            <svg width="36" height="34" viewBox="0 0 36 34" aria-hidden="true">
              <defs>
                <linearGradient id="cpa" x1="0" y1="0" x2="0" y2="1"><stop offset="0" stopColor="#1b7ff0" /><stop offset=".45" stopColor="#25b5c8" /><stop offset=".75" stopColor="#a4cf45" /><stop offset="1" stopColor="#f3c51e" /></linearGradient>
                <linearGradient id="cpb" x1="0" y1="0" x2="0" y2="1"><stop offset="0" stopColor="#b35cf0" /><stop offset=".5" stopColor="#f0539b" /><stop offset="1" stopColor="#fd8a4a" /></linearGradient>
              </defs>
              <path d="M16 0h7c3 0 4 2 5 5l1 4h-6c-3 0-4 2-5 5z" fill="#1d48d8" />
              <path d="M20 34h-7c-3 0-4-2-5-5l-1-4h6c3 0 4-2 5-5z" fill="#f4643c" />
              <path d="M10 0h11c-3 1-4 4-5 8l-3 11c-1 4-3 6-6 6H5c-4 0-5.500-3-4.500-7l3-11C5 2 7 0 10 0z" fill="url(#cpa)" />
              <path d="M26 34H15c3-1 4-4 5-8l3-11c1-4 3-6 6-6h2c4 0 5.500 3 4.500 7l-3 11c-1.500 5-3.500 7-6.500 7z" fill="url(#cpb)" />
            </svg>
          </TaskApp>
          <TaskApp label="File Explorer">
            <svg width="36" height="34" viewBox="0 0 36 34" aria-hidden="true">
              <defs><linearGradient id="fo" x1="0" y1="0" x2="1" y2="1"><stop offset="0" stopColor="#ffdb6b" /><stop offset="1" stopColor="#fbb91c" /></linearGradient></defs>
              <path d="M0 2c0-1 .5-2 2-2h10l4 4-4 6H0z" fill="#dc9c07" />
              <path d="M0 7h11l4-3h19c1 0 2 1 2 2v26c0 1-1 1-1 1H1c-1 0-1-1-1-1z" fill="url(#fo)" />
              <path d="M6 33v-7c0-2 2-4 4-4h16c2 0 4 2 4 4v7z" fill="#1173c2" />
              <path d="M11 27h14" stroke="#0b4f8f" strokeWidth="2" strokeLinecap="round" />
            </svg>
          </TaskApp>
          <TaskApp label="Edge" open>
            <svg width="36" height="36" viewBox="0 0 36 36" aria-hidden="true">
              <defs>
                <linearGradient id="eg" x1="0" y1="0" x2="1" y2=".4"><stop offset="0" stopColor="#2fb5ea" /><stop offset=".6" stopColor="#35c3c4" /><stop offset="1" stopColor="#66e15a" /></linearGradient>
                <linearGradient id="eb" x1="0" y1="0" x2="0" y2="1"><stop offset="0" stopColor="#1c97de" /><stop offset="1" stopColor="#0c63bb" /></linearGradient>
              </defs>
              <path d="M0 17C1 12 7 9 13 9c6 0 10 4 10 8-3-4-9-2-9 4 0 7 8 11 19 5-3 6-8 10-15 10C8 36 0 28 0 17z" fill="url(#eb)" />
              <path d="M14 17c-4 4-3 12 4 16 4 2 11-1 15-6 1-1 0-2-1-1-10 4-17-1-18-9z" fill="#14519c" />
              <path d="M0 17C1 7 9 0 18 0c10 0 18 7 18 15 0 6-4 9.500-9 9.500-4 0-6-1.500-5.500-3 1.500-1.500 1.500-3 1.500-4.500 0-4-4-7-9.500-7C7 10 2 12 0 17z" fill="url(#eg)" />
            </svg>
          </TaskApp>
          <TaskApp label="Microsoft Store">
            <svg width="36" height="36" viewBox="0 0 36 36" aria-hidden="true">
              <path d="M0 5h35v26c0 3-2 4-4 4H4c-2 0-4-1-4-4z" fill="#efefef" />
              <path d="M9 8V2h18v6" fill="none" stroke="#2bb4ec" strokeWidth="2" />
              <path d="M10 13h7v7h-7z" fill="#f1511f" /><path d="M18 13h7v7h-7z" fill="#7fba06" /><path d="M10 21h7v7h-7z" fill="#05a5f0" /><path d="M18 21h7v7h-7z" fill="#fdba0a" />
            </svg>
          </TaskApp>
          <TaskApp label="Outlook">
            <svg width="36" height="34" viewBox="0 0 36 34" aria-hidden="true">
              <path d="M6 12L20 1c1-1 2-1 3 0l13 9v18c0 2-2 4-4 4H12c-4 0-6-3-6-6z" fill="#2490dc" />
              <path d="M18 14L32 6l4 4v5L20 26z" fill="#0c4ea2" />
              <path d="M14 8l9-6 6 3-12 9z" fill="#4cc0f2" />
              <rect x="0" y="7" width="18" height="18" rx="1.500" fill="#1273ce" />
              <ellipse cx="9" cy="16" rx="4" ry="4.800" fill="none" stroke="#fff" strokeWidth="2.400" />
              <rect x="11" y="23" width="25" height="11" rx="3" fill="#2ce6dc" />
              <text x="23.500" y="32" fontSize="9.500" fontWeight="bold" textAnchor="middle" fill="#083c44">NEW</text>
            </svg>
          </TaskApp>
          <TaskApp label="Power BI">
            <svg width="28" height="36" viewBox="0 0 28 36" aria-hidden="true">
              <defs>
                <linearGradient id="pa" x1="0" y1="0" x2="0" y2="1"><stop offset="0" stopColor="#e9ab12" /><stop offset="1" stopColor="#c77c12" /></linearGradient>
                <linearGradient id="pb" x1="0" y1="0" x2="0" y2="1"><stop offset="0" stopColor="#f8d64a" /><stop offset="1" stopColor="#e4ae1c" /></linearGradient>
                <linearGradient id="pc" x1="0" y1="0" x2="0" y2="1"><stop offset="0" stopColor="#fbe785" /><stop offset="1" stopColor="#f5cf43" /></linearGradient>
              </defs>
              <path d="M15 0h13v36H15z" fill="url(#pa)" /><path d="M8 9h12v27H8z" fill="url(#pb)" /><path d="M0 18h12v18H0z" fill="url(#pc)" />
            </svg>
          </TaskApp>
          <TaskApp label="Visual Studio Code">
            <svg width="36" height="36" viewBox="0 0 36 36" aria-hidden="true">
              <path d="M1 22l3-3L27 0v10L5 27c-1 .5-2 .3-3-.5L0 24.500z" fill="#0a6db5" />
              <path d="M1 12l2-2.500c1-1 2-1 3-.3L27 25v11L.8 14.500c-1-1-.6-2 .2-2.500z" fill="#1089d3" />
              <path d="M27 0l8 4c.8.500 1 1 1 2v24c0 1-.2 1.500-1 2l-8 4z" fill="#27a7f2" />
            </svg>
          </TaskApp>
          <TaskApp label="Spotify" open>
            <svg width="34" height="34" viewBox="0 0 34 34" fill="none" strokeLinecap="round" aria-hidden="true">
              <circle cx="17" cy="17" r="16.500" fill="#1ed760" />
              <path d="M7 12c7-2 15-1 21 2.500" stroke="#16211a" strokeWidth="3" /><path d="M8 17.500c6-1.500 12-1 17.500 2" stroke="#16211a" strokeWidth="2.600" /><path d="M9 22.800c5-1.200 10-.7 14.500 1.700" stroke="#16211a" strokeWidth="2.200" />
            </svg>
          </TaskApp>
          <TaskApp label="Chrome" open>
            <svg width="36" height="36" viewBox="0 0 36 36" aria-hidden="true">
              <circle cx="18" cy="18" r="18" fill="#fbc116" />
              <path d="M2.400 9A18 18 0 0 1 33.600 9H18a9 9 0 0 0-7.800 13.500z" fill="#e33b2e" />
              <path d="M2.400 9A18 18 0 0 0 18 36l7.800-13.500A9 9 0 0 1 10.200 22.500z" fill="#229342" />
              <circle cx="18" cy="18" r="9" fill="#fff" /><circle cx="18" cy="18" r="7" fill="#2d7cf0" />
            </svg>
          </TaskApp>
          <div className="flex w-[66px] items-center justify-center">
            <button aria-label="Tableau" className="flex h-[60px] w-[60px] flex-col items-center rounded-md border border-white/5 bg-white/10">
              <span className="mt-[11px] flex h-[34px] w-[34px] items-center justify-center bg-[#f7f7f7]"><TableauMark size={30} /></span>
              <span className="mt-[8px] h-[5px] w-6 rounded-full bg-[#4cc2ff]" />
            </button>
          </div>
        </div>
      </div>

      <div className="ml-auto flex items-center pr-[33px]">
        <button aria-label="Show hidden icons" className="mr-[28px]"><Icon w={16} h={10} sw={2} className="text-white"><path d="M1 8.500l7-7 7 7" /></Icon></button>
        <button aria-label="OneDrive" className="mr-[27px]">
          <svg width="24" height="20" aria-hidden="true">
            <path d="M6 6c2-5 9-7 13-2 2 2 2 6 0 8H9z" fill="#8b8f94" />
            <path d="M5 15c-3 0-5-2-5-4.500S2 6 5 6c4-2 8 0 9 4v5z" fill="#d9dadc" />
            <circle cx="17" cy="13" r="6.800" fill="#d9272e" /><path d="M14.500 10.500l5 5M19.500 10.500l-5 5" stroke="#fff" strokeWidth="1.800" />
          </svg>
        </button>
        <button className="mr-[27px] flex w-[36px] flex-col items-center leading-[23px]"><span>ENG</span><span>US</span></button>
        <button aria-label="Network, volume and battery" className="mr-[25px] flex items-center gap-3">
          <Icon w={24} h={18} sw={2} className="text-white"><path d="M1 6.500c6-6.500 16-6.500 22 0M4.500 10.500c4.200-4.400 10.800-4.400 15 0M8 14c2.200-2.200 5.800-2.200 8 0" /><circle cx="12" cy="16" r="2" fill="currentColor" stroke="none" /></Icon>
          <Icon w={24} h={20} sw={1.800} className="text-white"><path d="M1 7h4l5-5v16l-5-5H1z" /><path d="M13.500 7c1.500 2 1.500 4 0 6" /><path d="M16.500 4c3 3.500 3 8.500 0 12M20 1.500c4.500 5 4.500 12 0 17" className="text-[#59606b]" /></Icon>
          <Icon w={24} h={16} sw={2} className="text-white"><rect x="1" y="1" width="19" height="14" rx="3" /><path d="M3 3.500h7v9H3z" fill="currentColor" stroke="none" /><path d="M22.500 5.500v5" strokeWidth="2.500" /></Icon>
        </button>
        <button className="mr-[14px] flex flex-col items-end pb-[2px] leading-[24px]"><span>9:34 AM</span><span>5/08/2024</span></button>
        <button aria-label="Notifications">
          <svg width="20" height="23" aria-hidden="true"><path d="M10 0c5 0 8 3.500 8 8v5l2 4v1H0v-1l2-4V8c0-4.500 3-8 8-8zM6.500 20h7c-.5 2-1.500 2.800-3.500 2.800S7 22 6.500 20z" fill="#8fe3ff" /></svg>
        </button>
      </div>
    </footer>
  );
}

export default function App() {
  return (
    <div className="flex h-screen flex-col overflow-hidden bg-[#f4f4f4]">
      <TitleBar />
      <MenuBar />
      <Toolbar />
      <div className="flex min-h-0 flex-1">
        <DataPane />
        <Cards />
        <Worksheet />
      </div>
      <SheetTabs />
      <StatusBar />
      <Taskbar />
    </div>
  );
}
